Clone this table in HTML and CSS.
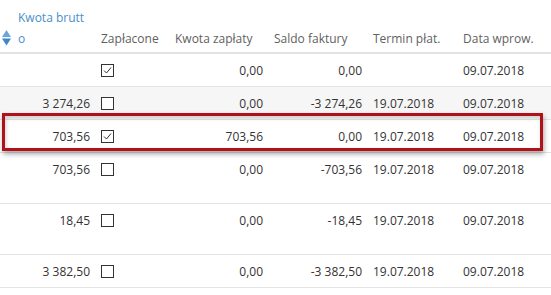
FILE: index.html
```html
<!DOCTYPE html>
<html lang="pl">
<head>
<meta charset="utf-8">
<title>Faktury</title>
<link rel="stylesheet" href="styles.css">
</head>
<body>
<div class="table">
  <div class="row head">
    <div class="cell sortcell">
      <svg class="sort" width="9" height="16" viewBox="0 0 9 16"><polygon points="4.5,0 9,7 0,7" fill="#6aa6d8"/><polygon points="0,8.5 9,8.5 4.5,15.5" fill="#3f86c6"/></svg>
      <span class="hlabel">Kwota brutto</span>
    </div>
    <div class="cell">Zapłacone</div>
    <div class="cell">Kwota zapłaty</div>
    <div class="cell">Saldo faktury</div>
    <div class="cell">Termin płat.</div>
    <div class="cell">Data wprow.</div>
  </div>

  <div class="row">
    <div class="cell num"></div>
    <div class="cell chk"><svg class="cb" width="13" height="13" viewBox="0 0 13 13"><rect x="0.5" y="0.5" width="12" height="12" fill="#fff" stroke="#333"/><polyline points="3,6.5 5.5,9 10,3.5" fill="none" stroke="#333" stroke-width="1"/></svg></div>
    <div class="cell num">0,00</div>
    <div class="cell num">0,00</div>
    <div class="cell"></div>
    <div class="cell">09.07.2018</div>
  </div>

  <div class="row alt">
    <div class="cell num">3&nbsp;274,26</div>
    <div class="cell chk"><svg class="cb" width="13" height="13" viewBox="0 0 13 13"><rect x="0.5" y="0.5" width="12" height="12" fill="#fff" stroke="#333"/></svg></div>
    <div class="cell num">0,00</div>
    <div class="cell num">-3&nbsp;274,26</div>
    <div class="cell">19.07.2018</div>
    <div class="cell">09.07.2018</div>
  </div>

  <div class="row marked">
    <div class="cell num">703,56</div>
    <div class="cell chk"><svg class="cb" width="13" height="13" viewBox="0 0 13 13"><rect x="0.5" y="0.5" width="12" height="12" fill="#fff" stroke="#333"/><polyline points="3,6.5 5.5,9 10,3.5" fill="none" stroke="#333" stroke-width="1"/></svg></div>
    <div class="cell num">703,56</div>
    <div class="cell num">0,00</div>
    <div class="cell">19.07.2018</div>
    <div class="cell">09.07.2018</div>
  </div>

  <div class="row tall">
    <div class="cell num">703,56</div>
    <div class="cell chk"><svg class="cb" width="13" height="13" viewBox="0 0 13 13"><rect x="0.5" y="0.5" width="12" height="12" fill="#fff" stroke="#333"/></svg></div>
    <div class="cell num">0,00</div>
    <div class="cell num">-703,56</div>
    <div class="cell">19.07.2018</div>
    <div class="cell">09.07.2018</div>
  </div>

  <div class="row tall">
    <div class="cell num">18,45</div>
    <div class="cell chk"><svg class="cb" width="13" height="13" viewBox="0 0 13 13"><rect x="0.5" y="0.5" width="12" height="12" fill="#fff" stroke="#333"/></svg></div>
    <div class="cell num">0,00</div>
    <div class="cell num">-18,45</div>
    <div class="cell">19.07.2018</div>
    <div class="cell">09.07.2018</div>
  </div>

  <div class="row">
    <div class="cell num">3&nbsp;382,50</div>
    <div class="cell chk"><svg class="cb" width="13" height="13" viewBox="0 0 13 13"><rect x="0.5" y="0.5" width="12" height="12" fill="#fff" stroke="#333"/></svg></div>
    <div class="cell num">0,00</div>
    <div class="cell num">-3&nbsp;382,50</div>
    <div class="cell">19.07.2018</div>
    <div class="cell">09.07.2018</div>
  </div>
</div>
</body>
</html>
```

FILE: styles.css
```css
html, body {
  margin: 0;
  padding: 0;
  background: #fff;
}
body {
  width: 551px;
  height: 295px;
  overflow: hidden;
  font-family: "Open Sans", "Segoe UI", sans-serif;
  font-size: 12px;
  color: #333;
}
.table {
  width: 551px;
}
.row {
  display: grid;
  grid-template-columns: 95px 74px 99px 99px 90px 94px;
  border-bottom: 1px solid #e4e4e4;
}
.row .cell {
  height: 32px;
  display: flex;
  align-items: center;
  padding: 0 5px 0 6px;
  white-space: nowrap;
}
.row .num {
  justify-content: flex-end;
}
.row.alt {
  background: #f6f6f6;
}
.row.tall {
  padding-bottom: 18px;
}
.row.marked {
  position: relative;
}
.row.marked::after {
  content: "";
  position: absolute;
  left: 2px;
  right: 8px;
  top: -7px;
  height: 32px;
  border: 3px solid #b0121a;
  box-shadow: 1px 3px 5px rgba(0, 0, 0, 0.35), inset 1px 2px 4px rgba(0, 0, 0, 0.18);
  pointer-events: none;
}
.row.head {
  border-bottom: 2px solid #e2e2e2;
}
.row.head .cell {
  height: 52px;
  align-items: flex-end;
  padding-bottom: 3px;
  box-sizing: border-box;
  line-height: 21px;
  color: #5f5f5f;
}
.row.head .sortcell {
  padding-left: 2px;
  padding-right: 0;
  white-space: normal;
}
.sort {
  flex: none;
  margin-bottom: 3px;
  margin-right: 7px;
}
.hlabel {
  width: 69px;
  word-break: break-all;
  color: #4a8fc9;
}
.cb {
  display: block;
}
```
